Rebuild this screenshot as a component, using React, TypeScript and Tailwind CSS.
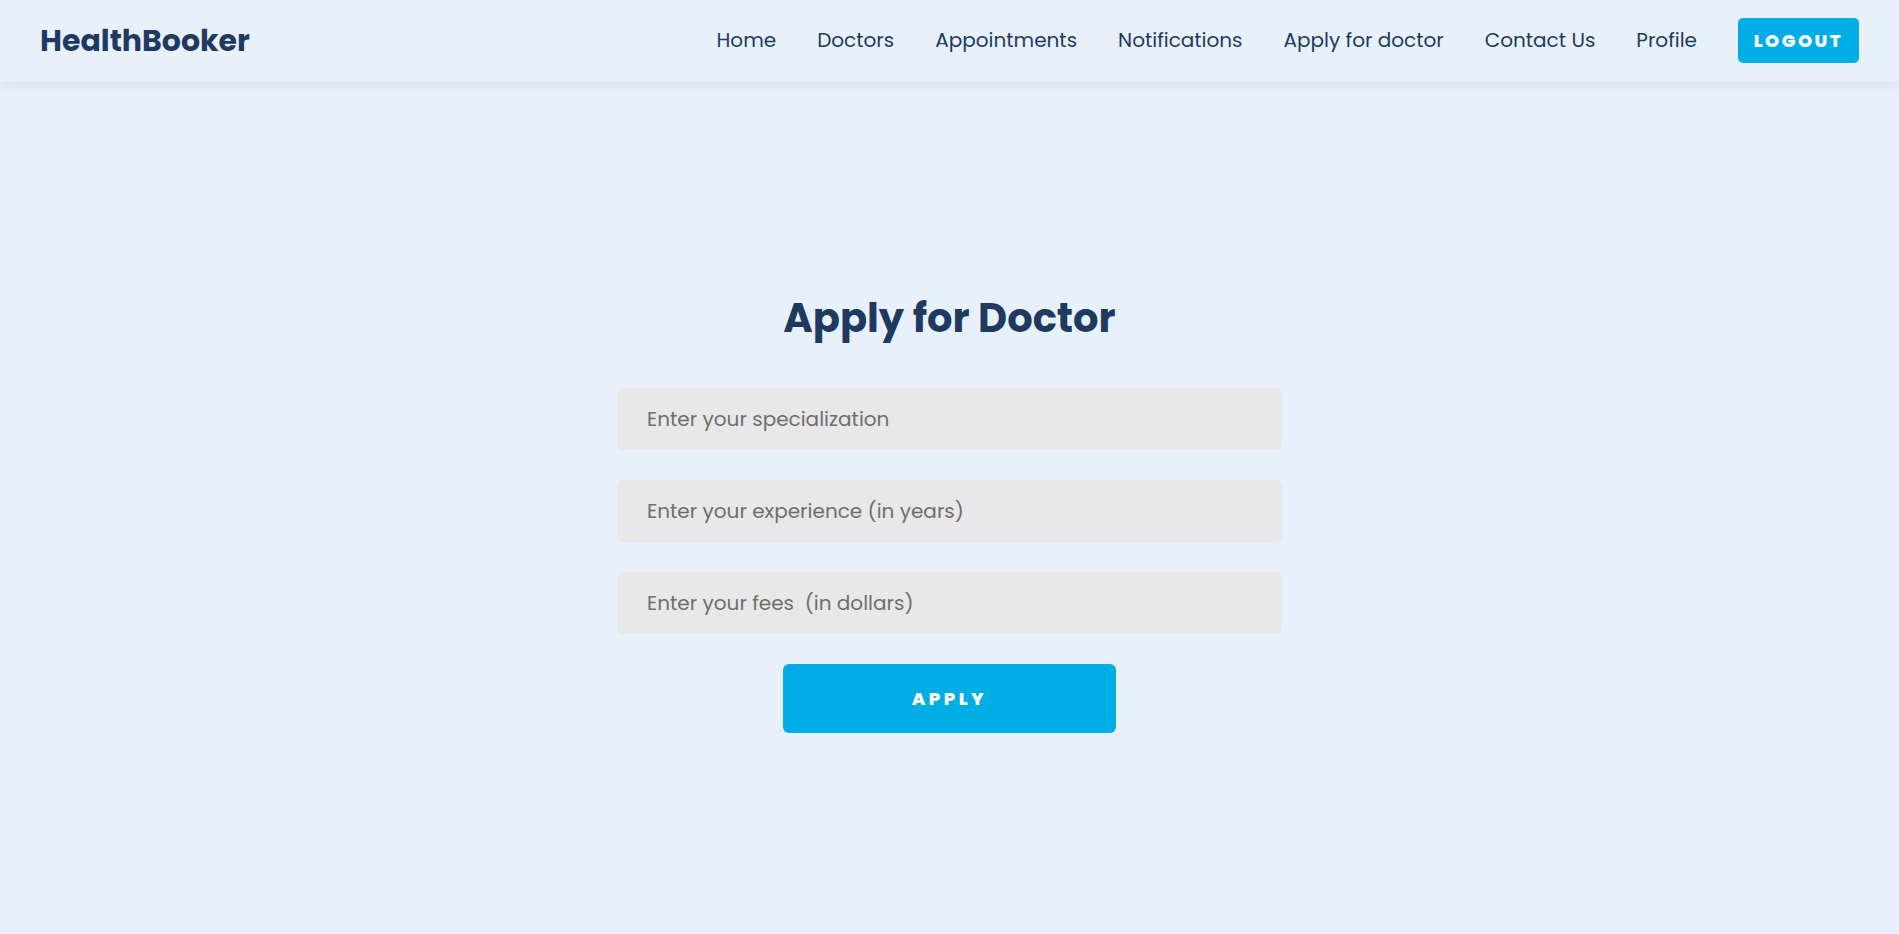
import React from "react";

const font = { fontFamily: "Poppins, 'Open Sans', 'Noto Sans', sans-serif" };

export default function App() {
  const links = ["Home", "Doctors", "Appointments", "Notifications", "Apply for doctor", "Contact Us", "Profile"];
  const inputCls =
    "w-[665px] h-[62px] rounded-[6px] bg-[#e8e8e8] px-[30px] text-[20px] text-[#333] placeholder:text-[#6e6e6e] outline-none";
  return (
    <div className="min-h-[934px] bg-[#e8f1fb] flex flex-col" style={font}>
      <header className="h-[82px] px-10 pb-[2px] flex items-center justify-between bg-[#e8f1fb] shadow-[0_4px_12px_rgba(30,58,95,0.08)] relative z-10">
        <div className="text-[30px] font-bold text-[#1e3a5f]">HealthBooker</div>
        <nav className="flex items-center gap-[41px]">
          {links.map((l) => (
            <a key={l} className="text-[20px] text-[#1e3a5f] cursor-pointer">{l}</a>
          ))}
          <button className="h-[45px] w-[121px] rounded-[5px] bg-[#00ade4] text-white font-extrabold text-[18px] tracking-[2.5px]">
            LOGOUT
          </button>
        </nav>
      </header>
      <main className="flex-1 flex flex-col items-center pt-[206px]">
        <h1 className="text-[40px] leading-[60px] font-bold text-[#1e3a5f]">Apply for Doctor</h1>
        <form className="mt-[40px] flex flex-col items-center gap-[30px]" onSubmit={(e) => e.preventDefault()}>
          <input className={inputCls} placeholder="Enter your specialization" />
          <input className={inputCls} placeholder="Enter your experience (in years)" />
          <input className={inputCls} placeholder="Enter your fees  (in dollars)" />
          <button className="w-[333px] h-[69px] rounded-[6px] bg-[#00ade4] text-white font-extrabold text-[18px] tracking-[3.5px]">
            APPLY
          </button>
        </form>
      </main>
    </div>
  );
}
